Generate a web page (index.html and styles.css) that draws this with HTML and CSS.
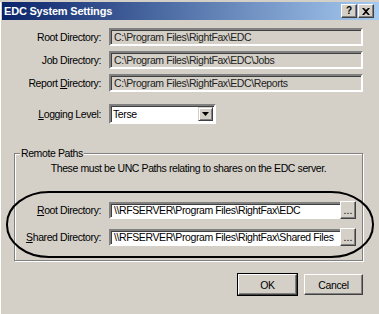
FILE: index.html
```html
<!DOCTYPE html>
<html lang="en">
<head>
    <meta charset="UTF-8">
    <title>EDC System Settings</title>
    <link rel="stylesheet" href="styles.css">
</head>
<body>
    <div class="window">
        <div class="titlebar">
            <span class="title">EDC System Settings</span>
            <div class="caption-buttons">
                <span class="cap">?</span>
                <span class="cap">
                    <svg width="8" height="7" viewBox="0 0 8 7"><path d="M0 0h2l2 2 2-2h2L5 3.5 8 7H6L4 5 2 7H0l3-3.5z" fill="#000"/></svg>
                </span>
            </div>
        </div>

        <div class="fields">
            <span class="lbl">Root Directory:</span>
            <div class="edit ro">C:\Program Files\RightFax\EDC</div>
            <span class="lbl">Job Directory:</span>
            <div class="edit ro">C:\Program Files\RightFax\EDC\Jobs</div>
            <span class="lbl">Report <u>D</u>irectory:</span>
            <div class="edit ro">C:\Program Files\RightFax\EDC\Reports</div>
            <span class="lbl spaced"><u>L</u>ogging Level:</span>
            <div class="combo spaced">
                <span class="combo-text">Terse</span>
                <span class="drop">
                    <svg width="7" height="4" viewBox="0 0 7 4"><path d="M0 0h7L3.5 4z" fill="#000"/></svg>
                </span>
            </div>
        </div>

        <div class="group">
            <span class="legend">Remote Paths</span>
            <p class="note">These must be UNC Paths relating to shares on the EDC server.</p>
            <div class="remote">
                <span class="lbl"><u>R</u>oot Directory:</span>
                <div class="edit">\\RFSERVER\Program Files\RightFax\EDC</div>
                <span class="browse">...</span>
                <span class="lbl"><u>S</u>hared Directory:</span>
                <div class="edit">\\RFSERVER\Program Files\RightFax\Shared Files</div>
                <span class="browse">...</span>
            </div>
            <!-- annotation drawn over the dialog -->
            <svg class="ring" width="368" height="68" viewBox="0 0 368 68">
                <rect x="1" y="1" width="366" height="65" rx="42" ry="32" fill="none" stroke="#000" stroke-width="2"/>
            </svg>
        </div>

        <div class="actions">
            <span class="btn default">OK</span>
            <span class="btn">Cancel</span>
        </div>
    </div>
</body>
</html>
```

FILE: styles.css
```css
body {
    margin: 0;
    overflow: hidden;
    background: #d4d0c8;
    font-family: "Liberation Sans", Arial, sans-serif;
    font-size: 10.5px;
    letter-spacing: -0.4px;
    color: #000;
}
.window {
    width: 379px;
    height: 312px;
    background: #d4d0c8;
    border-bottom: 2px solid #808080;
    box-shadow: inset 1px 0 #fff;
}
.titlebar {
    margin: 2px 0 0 2px;
    height: 18px;
    display: flex;
    align-items: center;
    justify-content: space-between;
    background: linear-gradient(to right, #0a246a, #a6caf0);
}
.title {
    color: #fff;
    font-weight: bold;
    font-size: 11px;
    letter-spacing: -0.2px;
    padding-left: 2px;
}
.caption-buttons {
    display: flex;
    gap: 1px;
    margin-right: 5px;
}
.cap {
    width: 14px;
    height: 12px;
    background: #d4d0c8;
    border: 1px solid;
    border-color: #fff #404040 #404040 #fff;
    box-shadow: inset -1px -1px #808080;
    display: flex;
    align-items: center;
    justify-content: center;
    font-weight: bold;
    font-size: 10px;
    letter-spacing: 0;
    line-height: 1;
}
.fields {
    display: grid;
    grid-template-columns: 101px 254px;
    column-gap: 8px;
    row-gap: 5px;
    margin-top: 8px;
    align-items: center;
}
.lbl {
    text-align: right;
    white-space: nowrap;
}
.edit {
    height: 14px;
    line-height: 14px;
    padding: 0 3px;
    background: #fff;
    border: 2px solid;
    border-color: #808080 #fff #fff #808080;
    box-shadow: inset 1px 1px #404040;
    white-space: nowrap;
    overflow: hidden;
}
.edit.ro {
    background: #d4d0c8;
    color: #222;
}
.spaced {
    margin-top: 7px;
}
.combo {
    width: 103px;
    height: 16px;
    display: flex;
    justify-content: space-between;
    background: #fff;
    border: 2px solid;
    border-color: #808080 #fff #fff #808080;
    box-shadow: inset 1px 1px #404040;
}
.combo-text {
    line-height: 16px;
    padding-left: 2px;
}
.drop {
    width: 13px;
    height: 12px;
    margin: 1px 1px 0 0;
    display: flex;
    align-items: center;
    justify-content: center;
    background: #d4d0c8;
    border: 1px solid;
    border-color: #d4d0c8 #404040 #404040 #d4d0c8;
    box-shadow: inset 1px 1px #fff, inset -1px -1px #808080;
}
.group {
    position: relative;
    margin: 29px 0 0 14px;
    width: 347px;
    height: 106px;
    border: 1px solid #808080;
    box-shadow: inset 1px 1px #fff, 1px 1px #fff;
}
.legend {
    position: absolute;
    top: -7px;
    left: 5px;
    padding: 0 1px;
    background: #d4d0c8;
}
.note {
    margin: 8px 0 0;
    text-align: center;
}
.remote {
    display: grid;
    grid-template-columns: 86px 227px 16px;
    column-gap: 8px;
    row-gap: 9px;
    margin-top: 27px;
    align-items: center;
}
.remote .edit {
    height: 13px;
    line-height: 13px;
    margin-right: -6px;
}
.browse, .btn {
    background: #d4d0c8;
    border: 1px solid;
    border-color: #fff #404040 #404040 #fff;
    box-shadow: inset -1px -1px #808080;
    display: flex;
    align-items: center;
    justify-content: center;
}
.browse {
    width: 14px;
    height: 16px;
    margin-left: -4px;
    line-height: 1;
    letter-spacing: 0;
}
.ring {
    position: absolute;
    left: -9px;
    top: 37px;
}
.actions {
    display: flex;
    justify-content: flex-end;
    gap: 6px;
    margin: 13px 16px 0 0;
}
.btn {
    width: 57px;
    height: 19px;
}
.btn.default {
    outline: 1px solid #000;
    margin-right: 1px;
}
```
